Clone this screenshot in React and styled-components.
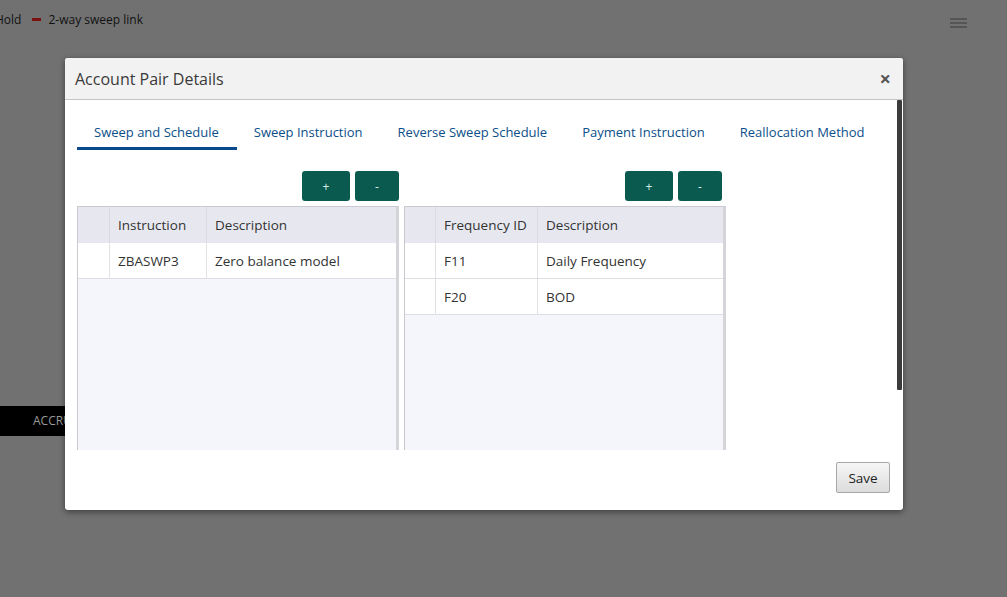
import React from "react";
import styled, { createGlobalStyle } from "styled-components";

const GlobalStyle = createGlobalStyle`
  html, body {
    margin: 0;
    padding: 0;
  }
  body {
    font-family: "Open Sans", "Noto Sans", sans-serif;
    background: #717171;
  }
  * {
    box-sizing: border-box;
  }
`;

const leftRows = [{ id: "ZBASWP3", desc: "Zero balance model" }];
const rightRows = [
  { id: "F11", desc: "Daily Frequency" },
  { id: "F20", desc: "BOD" },
];
const tabs = [
  "Sweep and Schedule",
  "Sweep Instruction",
  "Reverse Sweep Schedule",
  "Payment Instruction",
  "Reallocation Method",
];

const App = () => {
  return (
    <>
      <GlobalStyle />
      <Page>
        <TopBar>
          <Legend>
            <LegendText $offset>Hold</LegendText>
            <LegendDash />
            <LegendText>2-way sweep link</LegendText>
          </Legend>
          <Burger>
            <span />
            <span />
            <span />
          </Burger>
        </TopBar>
        <AccrualBar>ACCRUAL</AccrualBar>

        <Modal>
          <ModalHeader>
            <Title>Account Pair Details</Title>
            <Close>×</Close>
          </ModalHeader>
          <ModalBody>
            <Tabs>
              {tabs.map((t, i) => (
                <Tab key={t} $active={i === 0}>
                  {t}
                </Tab>
              ))}
            </Tabs>
            <Panels>
              <Panel>
                <ButtonRow>
                  <GreenButton $w={48}>+</GreenButton>
                  <GreenButton $w={44}>-</GreenButton>
                </ButtonRow>
                <Grid $cols="31px 97px 1fr">
                  <HeadCell />
                  <HeadCell>Instruction</HeadCell>
                  <HeadCell>Description</HeadCell>
                  {leftRows.map((r) => (
                    <React.Fragment key={r.id}>
                      <Cell />
                      <Cell>{r.id}</Cell>
                      <Cell>{r.desc}</Cell>
                    </React.Fragment>
                  ))}
                </Grid>
              </Panel>
              <Panel $inset={4}>
                <ButtonRow>
                  <GreenButton $w={48}>+</GreenButton>
                  <GreenButton $w={44}>-</GreenButton>
                </ButtonRow>
                <Grid $cols="30px 102px 1fr">
                  <HeadCell />
                  <HeadCell>Frequency ID</HeadCell>
                  <HeadCell>Description</HeadCell>
                  {rightRows.map((r) => (
                    <React.Fragment key={r.id}>
                      <Cell />
                      <Cell>{r.id}</Cell>
                      <Cell>{r.desc}</Cell>
                    </React.Fragment>
                  ))}
                </Grid>
              </Panel>
            </Panels>
            <ScrollThumb />
          </ModalBody>
          <ModalFooter>
            <SaveButton>Save</SaveButton>
          </ModalFooter>
        </Modal>
      </Page>
    </>
  );
};

const Page = styled.div`
  position: relative;
  width: 1007px;
  height: 597px;
  overflow: hidden;
  background: #717171;
`;

const TopBar = styled.div`
  display: flex;
  align-items: center;
  justify-content: space-between;
  height: 38px;
  padding: 0 40px 0 0;
`;

const Legend = styled.div`
  display: flex;
  align-items: center;
  gap: 7px;
`;

const LegendText = styled.span`
  font-size: 12px;
  color: #111;
  margin-left: ${(p) => (p.$offset ? "-5px" : "0")};
  margin-right: ${(p) => (p.$offset ? "4px" : "0")};
`;

const LegendDash = styled.span`
  width: 9px;
  height: 3px;
  background: #7a1010;
`;

const Burger = styled.div`
  display: flex;
  flex-direction: column;
  gap: 2px;
  margin-top: 8px;
  span {
    display: block;
    width: 17px;
    height: 2px;
    background: #555;
  }
`;

const AccrualBar = styled.div`
  margin-top: 368px;
  width: 200px;
  height: 30px;
  background: #000;
  color: #9a9a9a;
  font-size: 12px;
  line-height: 30px;
  padding-left: 33px;
`;

const Modal = styled.div`
  position: absolute;
  left: 65px;
  top: 58px;
  width: 838px;
  height: 452px;
  background: #fff;
  border-radius: 3px;
  box-shadow: 0 2px 6px rgba(0, 0, 0, 0.45);
  display: flex;
  flex-direction: column;
  overflow: hidden;
`;

const ModalHeader = styled.div`
  height: 42px;
  flex: none;
  display: flex;
  align-items: center;
  justify-content: space-between;
  padding: 0 12px 0 10px;
  background: #f2f2f2;
  border-bottom: 1px solid #c6c6c6;
`;

const Title = styled.h1`
  margin: 0;
  font-size: 16px;
  font-weight: 400;
  color: #3a3a3a;
`;

const Close = styled.span`
  font-size: 20px;
  font-weight: 700;
  color: #555;
  line-height: 1;
`;

const ModalBody = styled.div`
  position: relative;
  height: 350px;
  flex: none;
  overflow: hidden;
  padding: 16px 0 0 12px;
`;

const ScrollThumb = styled.div`
  position: absolute;
  right: 1px;
  top: 0;
  width: 5px;
  height: 290px;
  background: #3b3b3b;
  border-radius: 1px;
`;

const Tabs = styled.div`
  display: flex;
`;

const Tab = styled.div`
  height: 34px;
  padding: 0 18px 0 17px;
  display: flex;
  align-items: center;
  font-size: 13px;
  color: #0b4f8a;
  border-bottom: 3px solid ${(p) => (p.$active ? "#0a4a8c" : "transparent")};
`;

const Panels = styled.div`
  display: flex;
  gap: 5px;
  margin-top: 21px;
`;

const Panel = styled.div`
  width: 322px;
  display: flex;
  flex-direction: column;
  gap: 5px;
  & > div:first-child {
    padding-right: ${(p) => p.$inset || 0}px;
  }
`;

const ButtonRow = styled.div`
  display: flex;
  justify-content: flex-end;
  gap: 5px;
`;

const GreenButton = styled.button`
  width: ${(p) => p.$w}px;
  height: 30px;
  border: none;
  border-radius: 3px;
  background: #0b5a50;
  color: #d8ece8;
  font-family: inherit;
  font-size: 12px;
  padding: 0;
`;

const Grid = styled.div`
  display: grid;
  grid-template-columns: ${(p) => p.$cols};
  grid-auto-rows: 36px;
  align-content: start;
  height: 260px;
  background: #f5f6fb;
  border: 1px solid #c9c9cf;
  border-right-width: 3px;
  border-right-color: #d4d4d9;
`;

const HeadCell = styled.div`
  height: 37px;
  display: flex;
  align-items: center;
  padding-left: 8px;
  font-size: 13.5px;
  color: #333;
  background: #e7e8ef;
  border-left: 1px solid #dadbe2;
  border-bottom: 1px solid #d2d3da;
  &:first-child {
    border-left: none;
  }
`;

const Cell = styled.div`
  display: flex;
  align-items: center;
  padding-left: 8px;
  font-size: 13.5px;
  color: #333;
  background: #fff;
  border-left: 1px solid #e2e2e6;
  border-bottom: 1px solid #dedee3;
  &:nth-child(3n + 1) {
    border-left: none;
  }
`;

const ModalFooter = styled.div`
  flex: 1;
  display: flex;
  justify-content: flex-end;
  align-items: flex-start;
  padding: 12px 13px 0 0;
`;

const SaveButton = styled.button`
  width: 54px;
  height: 31px;
  border: 1px solid #a8a8a8;
  border-radius: 2px;
  background: linear-gradient(#f6f6f6, #dcdcdc);
  font-family: inherit;
  font-size: 13.5px;
  color: #222;
  padding: 0;
`;

export default App;
